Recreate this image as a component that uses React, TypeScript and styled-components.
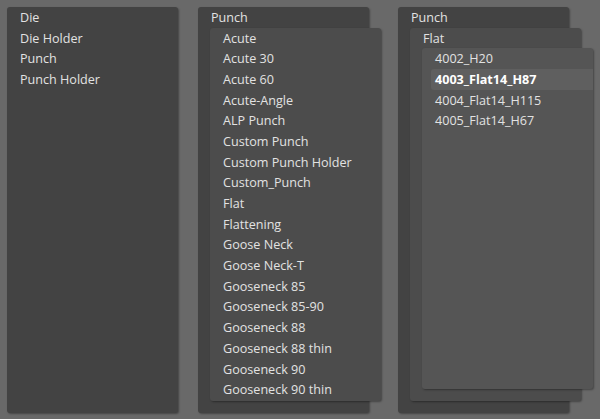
import React from "react";
import styled, { createGlobalStyle } from "styled-components";

const Global = createGlobalStyle`
  html, body { margin: 0; padding: 0; background: #696969; }
  body { font-family: "Open Sans", "DejaVu Sans", sans-serif; }
`;

const Page = styled.div`
  width: 600px;
  height: 419px;
  box-sizing: border-box;
  padding: 7px 7px 6px 7px;
  display: flex;
  align-items: stretch;
  background: #696969;
`;

const levelBg = ["#434343", "#4c4c4c", "#555555"];

const Panel = styled.div<{ $level: number; $gapLeft?: number; $clip?: boolean }>`
  background: ${(p) => levelBg[p.$level]};
  border-radius: 3px;
  box-shadow: 1px 1px 2px rgba(0, 0, 0, 0.35);
  display: flex;
  flex-direction: column;
  width: 171px;
  flex-shrink: 0;
  box-sizing: border-box;
  overflow: ${(p) => (p.$clip ? "hidden" : "visible")};
  margin-left: ${(p) => p.$gapLeft ?? 0}px;
`;

const ChildPanel = styled(Panel)`
  flex: 1;
  margin: 0 -12px 12px 12px;
`;

const Row = styled.div<{ $selected?: boolean }>`
  height: 20.7px;
  flex-shrink: 0;
  display: flex;
  align-items: center;
  margin-left: 9px;
  padding-left: 4px;
  font-size: 12.6px;
  color: ${(p) => (p.$selected ? "#ffffff" : "#e2e2e2")};
  font-weight: ${(p) => (p.$selected ? 700 : 400)};
  white-space: nowrap;
  border-radius: 3px 0 0 3px;
  background: ${(p) => (p.$selected ? "#5f5f5f" : "transparent")};
`;

const Title = styled(Row)``;

const categories = ["Die", "Die Holder", "Punch", "Punch Holder"];
const punches = [
  "Acute",
  "Acute 30",
  "Acute 60",
  "Acute-Angle",
  "ALP Punch",
  "Custom Punch",
  "Custom Punch Holder",
  "Custom_Punch",
  "Flat",
  "Flattening",
  "Goose Neck",
  "Goose Neck-T",
  "Gooseneck 85",
  "Gooseneck 85-90",
  "Gooseneck 88",
  "Gooseneck 88 thin",
  "Gooseneck 90",
  "Gooseneck 90 thin",
];
const flats = ["4002_H20", "4003_Flat14_H87", "4004_Flat14_H115", "4005_Flat14_H67"];

export default function App() {
  return (
    <>
      <Global />
      <Page>
        <Panel $level={0} $clip>
          {categories.map((c) => (
            <Row key={c}>{c}</Row>
          ))}
        </Panel>
        <Panel $level={0} $gapLeft={20}>
          <Title>Punch</Title>
          <ChildPanel $level={1}>
            {punches.map((c) => (
              <Row key={c}>{c}</Row>
            ))}
          </ChildPanel>
        </Panel>
        <Panel $level={0} $gapLeft={29}>
          <Title>Punch</Title>
          <ChildPanel $level={1}>
            <Title>Flat</Title>
            <ChildPanel $level={2} $clip>
              {flats.map((c) => (
                <Row key={c} $selected={c === "4003_Flat14_H87"}>
                  {c}
                </Row>
              ))}
            </ChildPanel>
          </ChildPanel>
        </Panel>
      </Page>
    </>
  );
}
